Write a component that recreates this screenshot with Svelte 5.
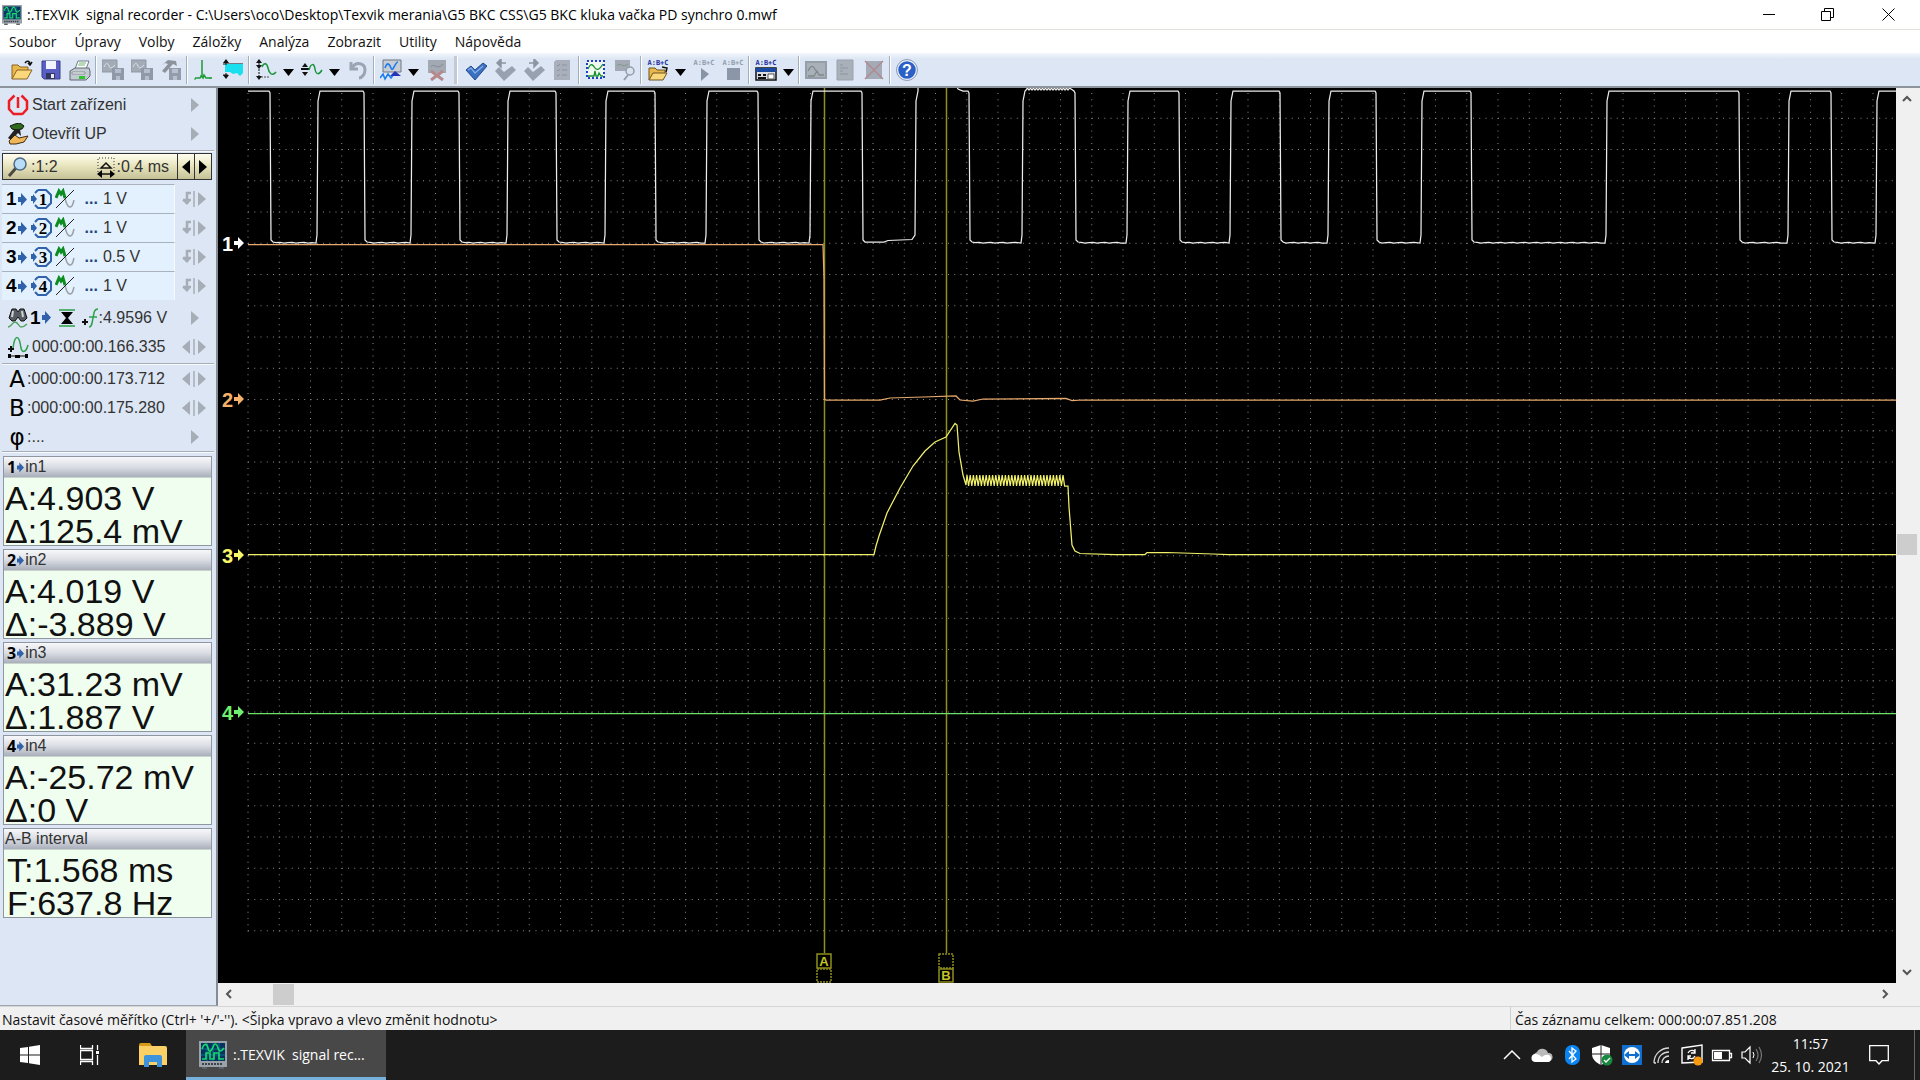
<script>
  const menu = ['Soubor', 'Úpravy', 'Volby', 'Záložky', 'Analýza', 'Zobrazit', 'Utility', 'Nápověda']

  // toolbar glyphs, all drawn on a 22x22 box
  const abc = (c) => `<text x="11" y="6" text-anchor="middle" font-family="DejaVu Sans Mono, monospace" font-weight="bold" font-size="7" fill="${c}">A:B+C</text>`
  const icons = {
    open: '<path d="M1 20V6h6l2 2h8v4" fill="#e8b84c" stroke="#8a6420"/><path d="M1 20l5-9h15l-5 9z" fill="#fbd77c" stroke="#8a6420"/><path d="M14 4c2-3 5-2 5 1M21 3l-2 3-2-2" fill="none" stroke="#111" stroke-width="1.5"/>',
    save: '<path d="M2 2h18v18H4l-2-2z" fill="#5a5fc4" stroke="#3a3f8c"/><path d="M6 2h10v8H6z" fill="#f2f4ff"/><path d="M6 14h9v6H6z" fill="#33365e"/><path d="M11 15h3v4h-3z" fill="#e8e8f4"/>',
    print: '<path d="M6 10l3-8h11l-3 8z" fill="#fff" stroke="#6d7a88"/><path d="M1 12l5-3h14l1 3v5l-4 4H1z" fill="#c3cad2" stroke="#5f6973"/><path d="M3 13h13v2H3z" fill="#f4f6f8" stroke="#6f7982" stroke-width=".7"/><path d="M10 17h6v3h-6z" fill="#2fc52f"/><path d="M10 4h7M9 6h7" stroke="#6fb56f"/>',
    copySave: '<path d="M0 1h15v12H0z" fill="#a3abb7" stroke="#8f97a3"/><path d="M2 8c2-5 4-4 5-1s3 2 6-1" fill="none" stroke="#dbe3ef"/><path d="M10 9h12v12H10z" fill="#9099a8"/><path d="M13 10h6v4h-6zM14 17h4v4h-4z" fill="#b4bdcc"/>',
    hammer: '<path d="M1 7l7-6 8 1 1 5-4-2-8 9-3-2 6-7-3-1z" fill="#8d939c"/><path d="M9 9h12v12H9z" fill="#949cab"/><path d="M12 10h6v4h-6zM13 17h4v4h-4z" fill="#b8c1cf"/>',
    spike: '<path d="M2 19h5l1-2 1 1V1v17l1 1 1-3 2 3h6" fill="none" stroke="#1c9c37" stroke-width="1.5"/><path d="M1 20h2M16 19h2" stroke="#1c9c37"/>',
    band: '<path d="M1 5h20M1 16h5" stroke="#111"/><path d="M3 5h18v9l-3 3-3-3-4 1-3-2H3z" fill="#19dfee"/><path d="M4 0l3 4H1zM4 20l3-4H1z" fill="#111"/><path d="M4 3v3M4 14v4" stroke="#111"/>',
    waveFit: '<path d="M4 1v18" stroke="#111" stroke-dasharray="2 1"/><path d="M4 0l3 4H1zM4 10L1 6h6zM4 21l-3-4h6z" fill="#111"/><path d="M6 18h8" stroke="#555" stroke-dasharray="2 1"/><path d="M7 8c2-5 5-4 6 1s4 9 8 4" fill="none" stroke="#17943a" stroke-width="1.5"/>',
    waveMid: '<path d="M4 4l3 4H1zM4 17l3-4H1z" fill="#111"/><path d="M0 10h8" stroke="#111" stroke-width="2"/><path d="M8 11c2-7 5-7 6-1s4 6 7 1" fill="none" stroke="#17943a" stroke-width="1.5"/>',
    undo: '<path d="M4 3v7h7M5 9c4-7 13-5 13 2 0 5-4 8-6 8" fill="none" stroke="#9aa4b4" stroke-width="3"/>',
    waves: '<path d="M3 1h18v12H3z" fill="#c9cdd4" stroke="#6d7682"/><path d="M5 9c2-6 4-5 6 0s4-6 7-6M0 19l3-4 2 5 3-5 3 4 3-4" fill="none" stroke="#1d7df0" stroke-width="1.6"/><path d="M15 12l-5 5h11z" fill="#2632b8"/>',
    delScreen: '<path d="M2 1h18v13H2z" fill="#a3a9b3"/><path d="M5 8c3-5 6 4 12-3" fill="none" stroke="#858c98"/><path d="M5 12l12 9M17 12L5 21" stroke="#b5888c" stroke-width="3"/>',
    check: '<path d="M1 11l5-4 4 4 8-7 4 3-12 14z" fill="#3b6fc0" stroke="#224a8e"/><path d="M3 11l3-2 4 5 8-7" fill="none" stroke="#86aee8" stroke-width="1.3"/>',
    checkL: '<path d="M1 12l4-4 5 5 8-6 4 4-12 11z" fill="#97a1b0"/><path d="M7 0v8L3 4zM7 4h5" fill="#8b95a4" stroke="#8b95a4" stroke-width="1.5"/>',
    checkR: '<path d="M1 12l4-4 5 5 8-6 4 4-12 11z" fill="#97a1b0"/><path d="M11 0v8l4-4zM6 4h5" fill="#8b95a4" stroke="#8b95a4" stroke-width="1.5"/>',
    list: '<path d="M4 1h14v20H2V3z" fill="#a9b0bc"/><path d="M5 6l1 1 2-2M5 11l1 1 2-2M5 16l1 1 2-2M10 6h5M10 11h5M10 16h5" fill="none" stroke="#8c94a1"/>',
    selection: '<path d="M2 2h17v17H2z" fill="#eef8ee" stroke="#1d3fd0" stroke-width="2" stroke-dasharray="2 2"/><path d="M3 10c3-7 5-4 7-1s5 1 8-4M3 17h6l1-5 1 5h2l1-3 2 3h2" fill="none" stroke="#179032" stroke-width="1.3"/>',
    searchWave: '<path d="M1 1h15v11H1z" fill="#a3aab6"/><path d="M3 7c3-5 5 3 11-2" fill="none" stroke="#7e9a84"/><circle cx="16" cy="12" r="4" fill="#dbe3ef" stroke="#949dab" stroke-width="1.5"/><path d="M14 16l-4 5" stroke="#949dab" stroke-width="2"/>',
    abcOpen: abc('#1c2f9e') + '<path d="M2 21V9h6l2 2h8v3" fill="#e8b84c" stroke="#6d5424"/><path d="M2 21l4-7h14l-4 7z" fill="#fbd77c" stroke="#6d5424"/><path d="M15 8l5 1-1 4" fill="none" stroke="#111" stroke-width="1.5"/>',
    abcPlay: abc('#929cad') + '<path d="M8 9l8 6-8 7z" fill="#8893a5"/>',
    abcStop: abc('#929cad') + '<path d="M5 9h13v12H5z" fill="#8b97a9"/>',
    abcWin: abc('#1c2f9e') + '<path d="M1 9h20v12H1z" fill="#d9dce2" stroke="#111" stroke-width="1.5"/><path d="M1 9h20v4H1z" fill="#1a4aa0"/><path d="M3 15h3v2H3zM8 15h3v2H8zM3 18h8v2H3z" fill="#111"/><path d="M13 15h6v5h-6z" fill="#fff" stroke="#555"/>',
    screen: '<path d="M0 2h22v18H0z" fill="#959da9"/><path d="M2 4h18v14H2z" fill="#a9b0ba"/><path d="M3 12c4-8 6-4 8 0M3 17h6l3-5 2 4h5" fill="none" stroke="#7d8a88" stroke-width="1.3"/>',
    page: '<path d="M3 1h16v20H3z" fill="#a9b0ba" stroke="#9ba2ad"/><path d="M6 6h3M6 9h8M6 12h3M6 15h8" stroke="#8d95a1"/>',
    pageDel: '<path d="M3 2h16v18H3z" fill="#a4abb6"/><path d="M2 2l18 18M20 2L2 20" stroke="#b08a90" stroke-width="1.5"/>',
    help: '<circle cx="11" cy="11" r="9.5" fill="#2a5fc6" stroke="#e8eefa" stroke-width="1.5"/><circle cx="11" cy="11" r="10.5" fill="none" stroke="#8c9bb6"/><text x="11" y="17" text-anchor="middle" font-family="Liberation Sans, sans-serif" font-weight="bold" font-size="16" fill="#fff">?</text>',
  }

  // '|' separator, 'v' drop-down caret, '||' start of the next band
  const toolbar = [
    'open', 'save', 'print', '|', 'copySave', 'copySave', 'hammer', '|', 'spike', 'band', '|',
    'waveFit', 'v', 'waveMid', 'v', 'undo', '|', 'waves', 'v', 'delScreen', '||',
    'check', 'checkL', 'checkR', 'list', '|', 'selection', 'searchWave', '|',
    'abcOpen', 'v', 'abcPlay', 'abcStop', '|', 'abcWin', 'v', '|', 'screen', 'page', 'pageDel', '|', 'help',
  ]

  const channels = [
    { n: 1, scale: '1 V' },
    { n: 2, scale: '1 V' },
    { n: 3, scale: '0.5 V' },
    { n: 4, scale: '1 V' },
  ]

  const readouts = [
    { n: 1, title: 'in1', rows: ['A:4.903 V', 'Δ:125.4 mV'] },
    { n: 2, title: 'in2', rows: ['A:4.019 V', 'Δ:-3.889 V'] },
    { n: 3, title: 'in3', rows: ['A:31.23 mV', 'Δ:1.887 V'] },
    { n: 4, title: 'in4', rows: ['A:-25.72 mV', 'Δ:0 V'] },
    { title: 'A-B interval', rows: ['T:1.568 ms', 'F:637.8 Hz'] },
  ]

  // plot space
  const W = 1678
  const H = 895
  const STEP = 31.25
  const X0 = 30
  const Y0 = -1
  const cols = Array.from({ length: 53 }, (_, i) => X0 + i * STEP)
  const lines = Array.from({ length: 27 }, (_, i) => Y0 + (i + 1) * STEP)

  const markers = [
    { n: 1, y: 155, color: '#ffffff' },
    { n: 2, y: 311, color: '#f6b26b' },
    { n: 3, y: 467, color: '#f7f76a' },
    { n: 4, y: 624, color: '#6ef06e' },
  ]

  const HI = 3
  const LO = 155
  const edges = [
    52, 99, 146, 193, 241, 289, 338, 387, 437, 488, 540, 592, 644, 697, 751, 804, 857, 909,
    961, 1012, 1062, 1110, 1158, 1203, 1253, 1388, 1521, 1570, 1613, 1658,
  ]

  function crankTrace() {
    let d = `M${X0} ${HI}`
    edges.forEach((x, i) => {
      if (i % 2 === 0) {
        d += `L${x - 1} ${HI}L${x} ${HI + 2}L${x + 1} ${LO - 3}L${x + 3} ${LO - 1}`
        if (x === 644) d += `L${x + 22} 154L${x + 26} 152.5L${x + 50} 151.5`
        else {
          for (let k = x + 6; k < edges[i + 1] - 3; k += 4) d += `L${k} ${LO - ((k * 7) % 3) / 3}`
          d += `L${edges[i + 1] - 1} ${LO}`
        }
      } else {
        d += `L${x} ${LO - 8}L${x + 1} ${HI + 10}L${x + 3} ${HI}`
        if (x === 697) d += 'L700 -3L738 -3L740 1L745 3'
        if (x === 804) for (let k = 808; k < 852; k += 3) d += `L${k} 2L${k + 1.5} 0`
      }
    })
    return d + `L${W} ${HI}`
  }

  const camTrace = `M${X0} 156.5H605L606 190L606.5 311L608 312H662L672 310L705 309L738 308L742 312L755 313L765 311L848 310.5L854 312.5L864 312H${W}`

  function injectorTrace() {
    let d = `M${X0} 466.5H656L658 458L661 448L669 425L682 400L695 378L707 363L717 354L728 349L737 335.5L739 337L741 364L745 387L748 397`
    for (let x = 749; x < 848; x += 3.2) d += `L${x} 387L${x + 1.6} 398`
    return d + `L850 398L851 419L854 457L857 463L862 465.5L897 466.5H927L929 464.5L949 464.5L995 466L1010 466.5H${W}`
  }
</script>

{#snippet logo(size)}
  <svg width={size} height={size} viewBox="0 0 28 28">
    <path d="M0 0h28v26H0z" fill="#9aa1a8" />
    <path d="M2 2h24v18H2z" fill="#05355e" />
    <path d="M2 8h24M2 14h24M8 2v18M14 2v18M20 2v18" stroke="#0c6d8c" />
    <path d="M3 8c2-6 5-6 6-1s3 4 5-1 4-3 5 1 3 4 6 0M3 18h4v-6h4v6h4v-6h5v6h5" fill="none" stroke="#1bd96c" stroke-width="1.6" />
    <path d="M3 23h20" stroke="#3d4349" stroke-width="2" stroke-dasharray="2 1" />
    <path d="M3 26h5v2H3zM20 26h5v2h-5z" fill="#5a6067" />
  </svg>
{/snippet}

{#snippet arrow()}
  <button class="nudge" aria-label="Změnit">
    <svg width="24" height="16" viewBox="0 0 24 16"><path d="M9 1l8 7-8 7z" fill="#a7adb6" /></svg>
  </button>
{/snippet}

{#snippet nudge()}
  <button class="nudge" aria-label="Posunout">
    <svg width="24" height="16" viewBox="0 0 24 16">
      <path d="M0 8l8-7v14zM24 8l-8-7v14z" fill="#a7adb6" /><path d="M12 0v16" stroke="#a7adb6" stroke-width="1.5" />
    </svg>
  </button>
{/snippet}

{#snippet blueArrow()}
  <svg class="blue" width="9" height="13" viewBox="0 0 9 13"><path d="M0 4h3V0l6 6.500-6 6.500V9H0z" fill="#2f62ab" /></svg>
{/snippet}

<div class="window">
  <header class="title">
    {@render logo(20)}
    <span>:.TEXVIK&nbsp; signal recorder - C:\Users\oco\Desktop\Texvik merania\G5 BKC CSS\G5 BKC kluka vačka PD synchro 0.mwf</span>
    <div class="controls">
      <button aria-label="Minimalizovat"><svg width="13" height="13"><path d="M0 6.500h12" stroke="#000" /></svg></button>
      <button aria-label="Obnovit"><svg width="13" height="13"><path d="M.5 3.500h9v9h-9zM3.500 3V.5h9v9H10" fill="none" stroke="#000" /></svg></button>
      <button aria-label="Zavřít"><svg width="13" height="13"><path d="M.5.5l12 12M12.500.5l-12 12" stroke="#000" /></svg></button>
    </div>
  </header>

  <nav class="menu">
    {#each menu as item}
      <button>{item}</button>
    {/each}
  </nav>

  <div class="toolbar" role="toolbar">
    {#each toolbar as t}
      {#if t === '|'}
        <i class="sep"></i>
      {:else if t === '||'}
        <i class="sep band"></i>
      {:else if t === 'v'}
        <button class="caret" aria-label="Rozbalit"><svg width="11" height="7"><path d="M0 0h11L5.500 7z" /></svg></button>
      {:else}
        <button class="tool" aria-label={t}><svg width="22" height="22" viewBox="0 0 22 22">{@html icons[t]}</svg></button>
      {/if}
    {/each}
  </div>

  <main>
    <aside>
      <section class="rows">
        <div class="row">
          <svg width="22" height="22" viewBox="0 0 22 22">
            <path d="M7.500 1.500L2 7v8l5 5.500M14.500 1.500L20 7v8l-5 5.500M6 20h9M11 3v11" fill="none" stroke="#ee1c25" stroke-width="2.500" />
          </svg>
          <span>Start zařízeni</span>{@render arrow()}
        </div>
        <div class="row">
          <svg width="22" height="22" viewBox="0 0 22 22">
            <path d="M3 3l5-2 5-1 4 3-2 3-6 1-4-1z" fill="#2f6b1c" stroke="#111" /><path d="M8 6l-7 9 3 2 7-7 3 3-1-7z" fill="#222" />
            <path d="M2 18l6-6 4 3 9-2-4 6-8 2H3z" fill="#f0b65a" stroke="#3d2b10" />
          </svg>
          <span>Otevřít UP</span>{@render arrow()}
        </div>
      </section>

      <div class="timebase">
        <button class="scale">
          <svg width="22" height="22" viewBox="0 0 22 22">
            <path d="M2 20l7-8" stroke="#4a4a40" stroke-width="3" /><circle cx="13" cy="8" r="6" fill="#b9dcf7" stroke="#4d6a86" stroke-width="1.500" />
          </svg>
          <span>:1:2</span>
          <svg class="step" width="18" height="22" viewBox="0 0 18 22">
            <path d="M1 16V2h16v14" fill="none" stroke="#333" stroke-dasharray="1 2" />
            <path d="M4 12l5-5 5 5zM1 18h16" fill="none" stroke="#111" stroke-width="1.500" /><path d="M0 18l5-4v8zM18 18l-5-4v8z" />
          </svg>
          <span>:0.4 ms</span>
        </button>
        <button class="half" aria-label="Méně"><svg width="8" height="14"><path d="M8 0v14L0 7z" /></svg></button>
        <button class="half" aria-label="Více"><svg width="8" height="14"><path d="M0 0v14l8-7z" /></svg></button>
      </div>

      {#each channels as ch}
        <div class="channel">
          <button class="input">
            <b>{ch.n}</b>{@render blueArrow()}
            <svg class="oct" width="22" height="22" viewBox="0 0 22 22">
              <path d="M7 2h8l5 5v8l-5 5H7l-3-3M7 2L4 5" fill="none" stroke="#2f62ab" stroke-width="2" />
              <path d="M0 8h2V6l4 5-4 5v-3H0z" fill="#2f62ab" />
              <text x="12" y="17" text-anchor="middle" font-family="Liberation Serif, serif" font-weight="bold" font-size="17">{ch.n}</text>
            </svg>
            <svg width="20" height="22" viewBox="0 0 20 22">
              <path d="M1 10l3-7 2 3 2-3 2 7" fill="none" stroke="#0c8d1f" stroke-width="3" />
              <path d="M10 10c1 5 2 9 5 9s3-4 4-7" fill="none" stroke="#9aa0a6" stroke-width="1.500" /><path d="M1 20L19 2" stroke="#222" />
            </svg>
            <span class="dots">...</span><span>{ch.scale}</span>
          </button>
          <button class="nudge" aria-label="Vazba">
            <svg width="24" height="16" viewBox="0 0 24 16">
              <path d="M16 1l8 7-8 7z" fill="#a7adb6" /><path d="M12 0v16" stroke="#a7adb6" stroke-width="1.500" />
              <path d="M9 2H5v11M1 9h8" fill="none" stroke="#a7adb6" stroke-width="2.500" /><path d="M0 9h9l-4 5z" fill="#a7adb6" />
            </svg>
          </button>
        </div>
      {/each}

      <section class="rows trigger">
        <div class="row">
          <svg width="22" height="22" viewBox="0 0 22 22">
            <path d="M2 11l3-9h4l2 3 2-3h4l3 9-3 3h-3l-3-4-3 4H5z" fill="#555b60" stroke="#111" /><path d="M5 10l1-6M15 4l1 6" stroke="#cfd4d8" stroke-width="2" />
            <path d="M1 20c4 0 4-5 7-5s4 5 6 5 4-1 6-3" fill="none" stroke="#4da35b" stroke-width="1.300" />
          </svg>
          <b>1</b>{@render blueArrow()}
          <svg class="trig" width="18" height="18" viewBox="0 0 18 18">
            <path d="M1 1h16M1 17h16" stroke="#2ca148" stroke-width="1.500" /><path d="M3 3h12l-5 6 5 6H3l5-6z" />
          </svg>
          <svg width="18" height="20" viewBox="0 0 18 20">
            <path d="M1 14h6M4 11v6" stroke="#111" stroke-width="2" /><path d="M8 19c3 0 3-4 4-9s1-9 5-9M8 9h8" fill="none" stroke="#2ca148" stroke-width="1.500" />
          </svg>
          <span class="level">:4.9596 V</span>{@render arrow()}
        </div>
        <div class="row">
          <svg width="22" height="22" viewBox="0 0 22 22">
            <path d="M1 13h6M4 10v6" stroke="#111" stroke-width="2" /><path d="M6 12c2-14 6-14 8 0 1 5 5 5 7-3" fill="none" stroke="#2ca148" stroke-width="1.500" />
            <path d="M3 20h16" stroke="#777" stroke-width="2" /><path d="M1 18h3v4H1zM18 18h3v4h-3zM8 19h5v3H8z" />
          </svg>
          <span>000:00:00.166.335</span>{@render nudge()}
        </div>
      </section>

      <section class="rows cursors">
        <div class="row"><em>A</em><span>:000:00:00.173.712</span>{@render nudge()}</div>
        <div class="row"><em>B</em><span>:000:00:00.175.280</span>{@render nudge()}</div>
        <div class="row"><em>φ</em><span>:...</span>{@render arrow()}</div>
      </section>

      <div class="readouts">
        {#each readouts as r}
          <section class="readout">
            <h2>{#if r.n}<b>{r.n}</b>{@render blueArrow()}{/if}{r.title}</h2>
            <div class="values" class:interval={!r.n}>
              {#each r.rows as v}<p>{v}</p>{/each}
            </div>
          </section>
        {/each}
      </div>
    </aside>

    <div class="view">
      <svg class="plot" viewBox="0 0 {W} {H}" preserveAspectRatio="xMinYMin meet">
        <g class="grid">
          {#each cols as x}<path d="M{x} 5V844" />{/each}
          {#each lines as y}<path d="M{X0} {y}H{W}" />{/each}
        </g>
        <g class="cursor">
          <path d="M606.500 0V865M728.500 0V865" />
          <rect x="599" y="866" width="14" height="14" /><rect x="599" y="881" width="14" height="13" stroke-dasharray="2 1" />
          <rect x="721" y="866" width="14" height="14" stroke-dasharray="2 1" /><rect x="721" y="881" width="14" height="13" />
          <text x="606" y="878">A</text><text x="728" y="892">B</text>
        </g>
        <path class="trace" d={crankTrace()} stroke="#ececec" />
        <path class="trace" d={camTrace} stroke="#e8a96c" />
        <path class="trace" d={injectorTrace()} stroke="#f0f06a" />
        <path class="trace" d="M{X0} 625.500H{W}" stroke="#6be06b" />
        {#each markers as m}
          <text class="mark" x="4" y={m.y + 8} fill={m.color}>{m.n}</text>
          <path d="M16 {m.y - 2}h4v-4l6 6-6 6v-4h-4z" fill={m.color} />
        {/each}
      </svg>
      <div class="scroll vertical">
        <button aria-label="Nahoru"><svg width="10" height="8"><path d="M1 6l4-4 4 4" /></svg></button>
        <div class="groove"><div class="thumb"></div></div>
        <button aria-label="Dolů"><svg width="10" height="8"><path d="M1 2l4 4 4-4" /></svg></button>
      </div>
      <div class="scroll horizontal">
        <button aria-label="Vlevo"><svg width="8" height="10"><path d="M6 1L2 5l4 4" /></svg></button>
        <div class="groove"><div class="thumb"></div></div>
        <button aria-label="Vpravo"><svg width="8" height="10"><path d="M2 1l4 4-4 4" /></svg></button>
      </div>
    </div>
  </main>

  <footer class="status">
    <span>Nastavit časové měřítko (Ctrl+ '+/'-''). &lt;Šipka vpravo a vlevo změnit hodnotu&gt;</span>
    <span class="total">Čas záznamu celkem: 000:00:07.851.208</span>
  </footer>

  <div class="taskbar">
    <button class="launch" aria-label="Start">
      <svg width="20" height="20" viewBox="0 0 20 20"><path d="M0 3l8-1v7.500H0zM9 1.800L20 0v9.500H9zM0 10.500h8V18l-8-1zM9 10.500h11V20L9 18.200z" fill="#fff" /></svg>
    </button>
    <button class="launch" aria-label="Zobrazení úloh">
      <svg width="20" height="20" viewBox="0 0 20 20"><path d="M.5 0v3.500h12V0M.5 20v-3.500h12V20M.5 5.500h12v9H.5zM17.500 0v5M17.500 10v10" fill="none" stroke="#fff" stroke-width="1.300" /><path d="M16 6h3v3h-3z" fill="#fff" /></svg>
    </button>
    <button class="launch wide" aria-label="Průzkumník souborů">
      <svg width="28" height="24" viewBox="0 0 28 24"><path d="M0 2q0-2 2-2h9l2 3H0z" fill="#d99a17" /><path d="M0 3h26q2 0 2 2v17H0z" fill="#fbd165" /><path d="M5 24V14q0-2 2-2h14q2 0 2 2v10h-5v-5h-8v5z" fill="#3e93dd" /></svg>
    </button>
    <button class="task">{@render logo(28)}<span>:.TEXVIK&nbsp; signal rec...</span></button>

    <div class="tray">
      <svg width="22" height="22" viewBox="0 0 22 22"><path d="M3 15l8-8 8 8" fill="none" stroke="#fff" stroke-width="1.500" /></svg>
      <svg width="22" height="22" viewBox="0 0 22 22"><path d="M5 17a5 5 0 0 1 1-9 6 6 0 0 1 11 1 4 4 0 0 1 1 8z" fill="#b9b9b9" /><path d="M4 18a4 4 0 0 1 1-8q3 0 6 3 3-3 7-2a4 4 0 0 1 0 7z" fill="#fff" /></svg>
      <svg width="22" height="22" viewBox="0 0 22 22"><rect x="4" y="1" width="15" height="20" rx="7" fill="#0a84f0" /><path d="M8 7l7 8-4 3V4l4 3-7 8" fill="none" stroke="#fff" stroke-width="1.300" /></svg>
      <svg width="22" height="22" viewBox="0 0 22 22"><path d="M10 1l9 3v6c0 6-5 9-9 11C6 19 1 16 1 10V4z" fill="#fff" /><path d="M10 1v20M1 10h18" stroke="#1c1c1c" /><circle cx="16" cy="16" r="5.500" fill="#16893f" /><path d="M13 16l2 2 4-4" fill="none" stroke="#fff" stroke-width="1.300" /></svg>
      <svg width="22" height="22" viewBox="0 0 22 22"><path d="M1 1h20v20H1z" fill="#0f6fd0" /><circle cx="11" cy="11" r="8" fill="#fff" /><path d="M3 11l5-4v3h6V7l5 4-5 4v-3H8v3z" fill="#0f6fd0" /></svg>
      <svg width="22" height="22" viewBox="0 0 22 22"><path d="M3 19C3 10 10 4 18 4M7 19c0-7 5-11 11-11M11 19c0-4 3-7 7-7M3 19h2" fill="none" stroke="#d8d8d8" stroke-width="1.300" /><path d="M14 19c0-2 2-3 4-3v3z" fill="#fff" /></svg>
      <svg width="22" height="22" viewBox="0 0 22 22"><path d="M1 4l20-3v17l-20 1z" fill="none" stroke="#fff" stroke-width="1.400" /><path d="M7 9c2-4 7-3 7 0M14 5v4h-4M14 12c-2 4-6 3-7 0M7 16v-4h3" fill="none" stroke="#fff" stroke-width="1.300" /><circle cx="17" cy="17" r="4.500" fill="#f79a10" /></svg>
      <svg width="22" height="22" viewBox="0 0 22 22"><path d="M1.500 6.500h17v10h-17zM18.500 9.500h2v4h-2" fill="none" stroke="#fff" stroke-width="1.300" /><path d="M3 8h8v7H3z" fill="#fff" /></svg>
      <svg width="22" height="22" viewBox="0 0 22 22"><path d="M1 8h3l5-5v16l-5-5H1z" fill="none" stroke="#fff" stroke-width="1.200" /><path d="M12 8q2 3 0 6" fill="none" stroke="#fff" /><path d="M15 5q4 6 0 12M18 3q5 8 0 16" fill="none" stroke="#777" stroke-width="1.200" /></svg>
    </div>
    <button class="clock"><time>11:57</time><time>25. 10. 2021</time></button>
    <button class="notify" aria-label="Centrum akcí">
      <svg width="20" height="20" viewBox="0 0 20 20"><path d="M.7.700h18.600v15H13L10 19l-3-3.300H.7z" fill="none" stroke="#fff" stroke-width="1.300" /></svg>
    </button>
  </div>
</div>

<style>
  :global(body) {
    margin: 0;
  }

  .window {
    display: flex;
    flex-direction: column;
    min-height: 100vh;
    font: 14px/20px "Open Sans", "Noto Sans", sans-serif;
    color: #111;
    background: #f0f0f0;
  }

  svg {
    display: block;
    flex: none;
  }

  button {
    margin: 0;
    padding: 0;
    border: 0;
    background: none;
    font: inherit;
    color: inherit;
    display: flex;
    align-items: center;
  }

  .title {
    display: flex;
    align-items: center;
    height: 29px;
    padding-left: 2px;
    background: #fff;
    border-bottom: 1px solid #e0e4dc;
  }
  .title span {
    margin-left: 5px;
    color: #000;
    white-space: nowrap;
  }
  .controls {
    display: flex;
    margin-left: auto;
  }
  .controls button {
    width: 58px;
    height: 28px;
    justify-content: center;
  }
  .controls button:last-child {
    width: 64px;
  }

  .menu {
    display: flex;
    gap: 18px;
    height: 23px;
    padding-left: 9px;
    background: #fff;
  }

  .toolbar {
    display: flex;
    align-items: center;
    height: 33px;
    padding-left: 7px;
    background: linear-gradient(#f4f7fc, #dce6f4 6px);
    border-bottom: 2px solid #8e949c;
  }
  .tool {
    width: 29px;
    height: 28px;
    justify-content: center;
  }
  .caret {
    width: 17px;
    height: 28px;
    justify-content: center;
    padding-top: 6px;
  }
  .sep {
    width: 1px;
    height: 28px;
    margin: 0 1px;
    background: #a4adba;
    border-right: 1px solid #fff;
  }
  .sep.band {
    width: 3px;
    margin: 0 3px;
    background: #c3cad5;
  }

  main {
    display: flex;
    flex: 1;
  }

  aside {
    width: 212px;
    flex: none;
    padding: 0 2px;
    border-right: 2px solid #858c95;
    background: #dce6f4;
    border-bottom: 1px solid #a0a6ae;
    font-family: "Liberation Sans", Arial, sans-serif;
    font-size: 16px;
    color: #333;
  }
  .rows {
    padding: 2px 0;
    border-bottom: 1px solid #a9afb8;
    box-shadow: 0 1px #f6f9fd;
  }
  .trigger {
    padding-top: 3px;
  }
  .cursors {
    padding: 0;
  }
  .row {
    display: flex;
    align-items: center;
    height: 29px;
    padding-left: 5px;
  }
  .row span {
    margin-left: 3px;
    white-space: nowrap;
  }
  .row b,
  .input b {
    font-size: 19px;
    color: #000;
    margin-left: 4px;
  }
  .row b {
    margin-left: 1px;
  }
  .row em {
    width: 20px;
    text-align: center;
    font: 23px/28px "DejaVu Sans", sans-serif;
    color: #000;
  }
  .row em + span,
  .row .level {
    margin-left: 0;
  }
  .trig {
    margin: 0 5px 0 7px;
  }
  .nudge {
    margin-left: auto;
    margin-right: 8px;
  }

  .timebase {
    display: flex;
    height: 27px;
    margin: 2px 2px 4px 0;
    border: 1px solid #333;
    box-sizing: border-box;
    background: linear-gradient(#fffef0, #e9e6bf 45%, #c5c197);
  }
  .scale {
    flex: 1;
    padding-left: 4px;
    gap: 2px;
  }
  .scale .step {
    margin-left: auto;
  }
  .scale span:last-child {
    margin-right: 8px;
  }
  .half {
    width: 17px;
    justify-content: center;
    border-left: 1px solid #333;
  }

  .channel {
    display: flex;
    align-items: center;
    height: 29px;
  }
  .input {
    width: 173px;
    height: 29px;
    box-sizing: border-box;
    border-top: 1px solid #a9b1bc;
    border-right: 1px solid #f6f9fd;
    background: #e3f0fd;
  }
  .blue {
    margin-left: 1px;
  }
  .oct {
    margin: 0 2px 0 4px;
  }
  .dots {
    margin: 0 5px 0 10px;
    color: #24467c;
    font-weight: bold;
  }

  .readouts {
    display: flex;
    flex-direction: column;
    gap: 3px;
    padding: 4px 2px 0 1px;
  }
  .readout {
    border: 1px solid #8f969f;
  }
  h2 {
    display: flex;
    align-items: center;
    margin: 0;
    height: 20px;
    padding-left: 1px;
    font-size: 16px;
    font-weight: normal;
    background: linear-gradient(#f7f8fa, #dadde3 50%, #a9afbb);
  }
  h2 b {
    margin-left: 2px;
    font-family: "Open Sans", sans-serif;
    color: #000;
  }
  h2 .blue {
    width: 7px;
    margin-right: 1px;
  }
  .values {
    height: 63px;
    padding: 4px 0 0 1px;
    background: #effeef;
    border-top: 1px solid #c9d3cc;
  }
  .values.interval {
    padding-left: 3px;
  }
  p {
    margin: 0;
    font-size: 34px;
    line-height: 33px;
    color: #111;
    white-space: nowrap;
  }

  .view {
    flex: 1;
    min-width: 0;
    display: grid;
    grid-template-columns: 1fr 24px;
    grid-template-rows: 1fr 23px;
  }
  .plot {
    width: 100%;
    height: 100%;
    background: #000;
  }
  .grid path {
    stroke: #8a8a8a;
    stroke-width: 1;
    stroke-dasharray: 1 5.25;
  }
  .trace {
    fill: none;
    stroke-width: 1.25;
  }
  .cursor path,
  .cursor rect {
    fill: none;
    stroke: #8f8f1e;
    stroke-width: 1.5;
  }
  .cursor text {
    font: bold 13px "Liberation Sans", sans-serif;
    fill: #c4c424;
    text-anchor: middle;
  }
  .mark {
    font: bold 20px "Liberation Sans", sans-serif;
  }

  .scroll {
    display: flex;
    background: #f0f0f0;
  }
  .scroll path {
    fill: none;
    stroke: #555;
    stroke-width: 2;
  }
  .scroll button {
    width: 22px;
    height: 22px;
    justify-content: center;
  }
  .groove {
    flex: 1;
    display: flex;
  }
  .thumb {
    background: #cdcdcd;
  }
  .vertical,
  .vertical .groove {
    flex-direction: column;
  }
  .vertical .thumb {
    width: 20px;
    height: 21px;
    margin: 424px 0 0 1px;
  }
  .horizontal .thumb {
    width: 21px;
    height: 21px;
    margin: 1px 0 0 33px;
  }

  .status {
    display: flex;
    height: 23px;
    border-top: 1px solid #d5d5d5;
    white-space: nowrap;
  }
  .status span {
    flex: 1;
    padding: 3px 0 0 2px;
  }
  .status .total {
    flex: 0 0 405px;
    padding-left: 4px;
    border-left: 1px solid #d0d0d0;
  }

  .taskbar {
    display: flex;
    height: 50px;
    background: #1c1c1c;
    color: #fff;
  }
  .launch {
    width: 60px;
    justify-content: center;
  }
  .launch.wide {
    width: 66px;
  }
  .task {
    width: 200px;
    box-sizing: border-box;
    padding: 2px 4px 0 13px;
    gap: 6px;
    background: #484848;
    border-bottom: 3px solid #76b1dd;
    white-space: nowrap;
  }
  .tray {
    display: flex;
    align-items: center;
    gap: 8px;
    margin-left: auto;
  }
  .clock {
    width: 95px;
    flex-direction: column;
    justify-content: center;
    line-height: 23px;
    white-space: nowrap;
  }
  .notify {
    width: 57px;
    box-sizing: border-box;
    margin-right: 5px;
    border-right: 1px solid #666;
    justify-content: center;
    padding-right: 14px;
  }
</style>
